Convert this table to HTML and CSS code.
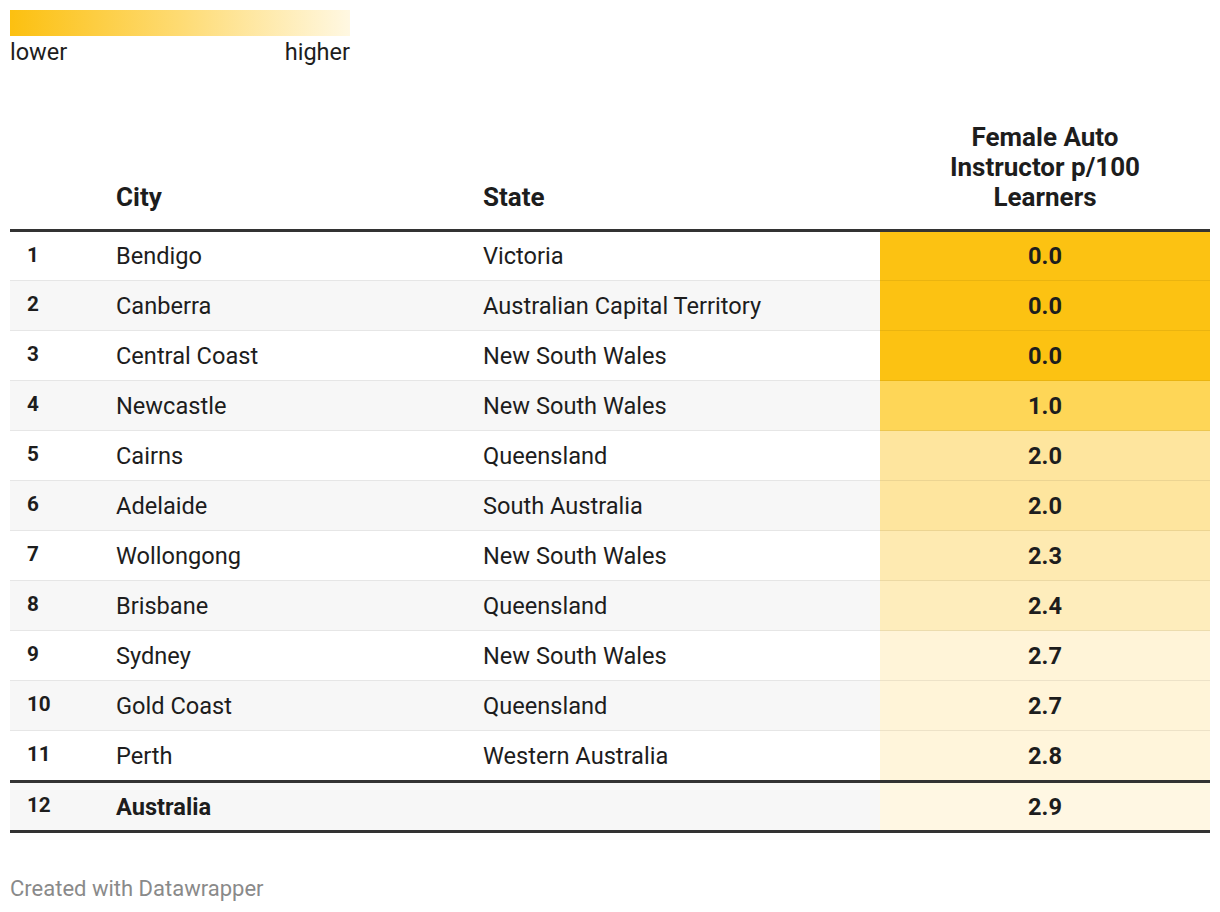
FILE: index.html
```html
<!DOCTYPE html>
<html>
<head>
<meta charset="utf-8">
<link rel="stylesheet" href="styles.css">
</head>
<body>
<div class="chart">
  <div class="legend">
    <div class="legend-bar"></div>
    <div class="legend-labels"><span>lower</span><span>higher</span></div>
  </div>
  <table class="tbl">
    <colgroup>
      <col class="c-rank"><col class="c-city"><col class="c-state"><col class="c-val">
    </colgroup>
    <thead>
      <tr>
        <th class="rank"></th>
        <th>City</th>
        <th>State</th>
        <th class="val">Female Auto<br>Instructor p/100<br>Learners</th>
      </tr>
    </thead>
    <tbody>
      <tr><td class="rank">1</td><td>Bendigo</td><td>Victoria</td><td class="val v0">0.0</td></tr>
      <tr class="alt"><td class="rank">2</td><td>Canberra</td><td>Australian Capital Territory</td><td class="val v0">0.0</td></tr>
      <tr><td class="rank">3</td><td>Central Coast</td><td>New South Wales</td><td class="val v0">0.0</td></tr>
      <tr class="alt"><td class="rank">4</td><td>Newcastle</td><td>New South Wales</td><td class="val v1">1.0</td></tr>
      <tr><td class="rank">5</td><td>Cairns</td><td>Queensland</td><td class="val v2">2.0</td></tr>
      <tr class="alt"><td class="rank">6</td><td>Adelaide</td><td>South Australia</td><td class="val v2">2.0</td></tr>
      <tr><td class="rank">7</td><td>Wollongong</td><td>New South Wales</td><td class="val v23">2.3</td></tr>
      <tr class="alt"><td class="rank">8</td><td>Brisbane</td><td>Queensland</td><td class="val v24">2.4</td></tr>
      <tr><td class="rank">9</td><td>Sydney</td><td>New South Wales</td><td class="val v27">2.7</td></tr>
      <tr class="alt"><td class="rank">10</td><td>Gold Coast</td><td>Queensland</td><td class="val v27">2.7</td></tr>
      <tr class="last"><td class="rank">11</td><td>Perth</td><td>Western Australia</td><td class="val v28">2.8</td></tr>
    </tbody>
    <tfoot>
      <tr><td class="rank">12</td><td class="strong">Australia</td><td></td><td class="val v29">2.9</td></tr>
    </tfoot>
  </table>
  <div class="footer">Created with Datawrapper</div>
</div>
</body>
</html>
```
FILE: styles.css
```css
* { box-sizing: border-box; }
html, body { margin: 0; padding: 0; background: #fff; }
body {
  font-family: Roboto, "Liberation Sans", Arial, sans-serif;
  color: #1d1d1d;
}
.chart { padding: 10px 10px 0 10px; width: 1220px; }
.legend { width: 340px; }
.legend-bar {
  height: 26px;
  background: linear-gradient(to right, #fcc010, #fedb73 50%, #fff8e2);
}
.legend-labels {
  display: flex;
  justify-content: space-between;
  font-size: 23.5px;
  line-height: 32px;
  color: #1d1d1d;
}
.tbl {
  margin-top: 44px;
  width: 1200px;
  border-collapse: collapse;
  table-layout: fixed;
  font-size: 23.6px;
}
.c-rank { width: 90px; }
.c-city { width: 367px; }
.c-state { width: 413px; }
.c-val { width: 330px; }
.tbl th {
  text-align: left;
  font-weight: 700;
  font-size: 26px;
  line-height: 30px;
  vertical-align: bottom;
  padding: 10px 16px 17px 16px;
  border-bottom: 3px solid #333;
}
.tbl th.val { text-align: center; }
.tbl td {
  height: 50px;
  padding: 0 16px;
  line-height: 26px;
  border-bottom: 1px solid #e6e6e6;
  vertical-align: middle;
}
.tbl tr.alt td { background: #f7f7f7; }
.tbl td.rank { font-weight: 700; font-size: 20.7px; padding-left: 17px; padding-bottom: 3px; }
.tbl td.val {
  text-align: center;
  font-weight: 700;
  border-bottom-color: rgba(0,0,0,0.07);
}
.tbl tr.last td { border-bottom: none; height: 51px; }
.tbl tfoot td {
  height: 50px;
  background: #f7f7f7;
  border-top: 3px solid #333;
  border-bottom: 3px solid #333;
}
.tbl tfoot td.val { border-bottom-color: #333; }
.tbl td.strong { font-weight: 700; }
.tbl tr td.v0 { background: #fcc212; }
.tbl tr td.v1 { background: #fed657; }
.tbl tr td.v2 { background: #fee59e; }
.tbl tr td.v23 { background: #feeab1; }
.tbl tr td.v24 { background: #feedbc; }
.tbl tr td.v27 { background: #fff4d8; }
.tbl tr td.v28 { background: #fff5db; }
.tbl tfoot tr td.v29 { background: #fff7e3; }
.footer {
  margin-top: 43px;
  font-size: 22px;
  line-height: 26px;
  color: #8a8a8a;
}
```
